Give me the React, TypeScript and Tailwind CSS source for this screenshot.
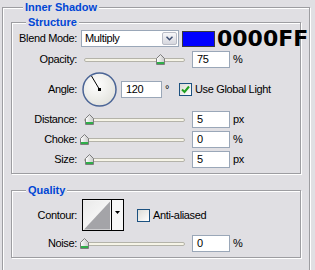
import React from 'react';

const Thumb = () => (
  <svg width="9" height="11" viewBox="0 0 9 11">
    <defs>
      <linearGradient id="thumbFill" x1="0" y1="0" x2="1" y2="0">
        <stop offset="0" stopColor="#ffffff" />
        <stop offset="1" stopColor="#c8c8c8" />
      </linearGradient>
    </defs>
    <path d="M4.5 0.5 L8.5 4.5 V10.5 H0.5 V4.5 Z" fill="url(#thumbFill)" stroke="#7d7d7d" />
    <rect x="1" y="8" width="7" height="2" fill="#2fae49" />
  </svg>
);

const Slider = ({ pos }: { pos: number }) => (
  <div className="relative ml-[4px] flex h-[17px] w-[104px] shrink-0 items-center">
    <div className="ml-[3px] h-[4px] w-[101px] rounded-[2px] border border-[#b4b3a9] bg-[#f6f4e7]" />
    <div className="absolute top-[3px] leading-none" style={{ left: pos }}>
      <Thumb />
    </div>
  </div>
);

const Field = ({ value, unit, className = '' }: { value: string; unit?: string; className?: string }) => (
  <>
    <div className={`h-[17px] shrink-0 border border-[#9aa7b8] bg-white pl-[4px] leading-[15px] ${className}`}>{value}</div>
    {unit && <span className="ml-[3px]">{unit}</span>}
  </>
);

const Label = ({ children }: { children: React.ReactNode }) => (
  <span className="w-[65px] shrink-0 text-right">{children}</span>
);

const Check = ({ checked }: { checked?: boolean }) => (
  <div className="h-[13px] w-[13px] shrink-0 border border-[#1c5180] bg-gradient-to-br from-[#dcdcd7] to-[#ffffff]">
    {checked && (
      <svg width="11" height="11" viewBox="0 0 11 11">
        <path d="M2 5.5 L4.5 8 L9 2.5" fill="none" stroke="#21a121" strokeWidth="2" />
      </svg>
    )}
  </div>
);

const Group = ({
  title,
  titleClass,
  className,
  children,
}: {
  title: string;
  titleClass: string;
  className: string;
  children: React.ReactNode;
}) => (
  <div className={`flex flex-col border border-[#9d9da1] shadow-[1px_1px_0_#fff,inset_1px_1px_0_#fff] ${className}`}>
    <div className={`-mt-[7px] w-fit bg-[#e0dfe3] px-[2px] text-[11px] font-bold leading-[13px] tracking-normal text-[#0046d5] ${titleClass}`}>
      {title}
    </div>
    {children}
  </div>
);

const Dial = () => (
  <svg width="35" height="35" viewBox="0 0 35 35" className="ml-[5px] shrink-0">
    <defs>
      <radialGradient id="dialFill" cx="0.4" cy="0.35" r="0.7">
        <stop offset="0" stopColor="#ffffff" />
        <stop offset="1" stopColor="#e2e2dc" />
      </radialGradient>
    </defs>
    <circle cx="17.5" cy="17.5" r="16.5" fill="url(#dialFill)" stroke="#4b6596" strokeWidth="1.5" />
    <line x1="17.5" y1="17.5" x2="9.5" y2="4" stroke="#000" strokeWidth="1" />
    <rect x="16" y="16" width="3" height="3" fill="#000" />
  </svg>
);

export default function App() {
  return (
    <div className="h-[270px] w-[315px] overflow-hidden bg-[#e0dfe3] pl-[2px] pt-[7px] font-['Liberation_Sans',Arial,sans-serif] text-[11px] leading-[13px] tracking-[-0.35px] text-black">
      <Group title="Inner Shadow" titleClass="ml-[12px]" className="h-[300px] w-[308px] px-[8px]">
        <Group title="Structure" titleClass="ml-[14px]" className="mt-[8px] w-[290px] pb-[5px]">
          <div className="mt-[1px] flex h-[17px] items-center">
            <Label>Blend Mode:</Label>
            <div className="ml-[4px] flex h-[17px] w-[98px] shrink-0 items-center border border-[#9aa7b8] bg-white">
              <span className="flex-1 pl-[3px]">Multiply</span>
              <div className="mr-[1px] flex h-[13px] w-[15px] items-center justify-center rounded-[2px] border border-[#b9bcc6] bg-gradient-to-b from-[#f7f7f9] to-[#d6d7de]">
                <svg width="7" height="5" viewBox="0 0 7 5">
                  <path d="M0.5 0.8 L3.5 3.8 L6.5 0.8" fill="none" stroke="#3c4e72" strokeWidth="1.5" />
                </svg>
              </div>
            </div>
            <div className="ml-[3px] h-[16px] w-[33px] shrink-0 border border-[#3a3a3a] bg-[#0000ff]" />
            <span className="ml-[2px] whitespace-nowrap font-['DejaVu_Sans',sans-serif] text-[22px] font-bold leading-[17px] tracking-normal">
              0000FF
            </span>
          </div>

          <div className="mt-[4px] flex h-[17px] items-center">
            <Label>Opacity:</Label>
            <Slider pos={75} />
            <Field value="75" unit="%" className="ml-[7px] w-[38px]" />
          </div>

          <div className="mt-[4px] flex h-[35px] items-center">
            <Label>Angle:</Label>
            <Dial />
            <Field value="120" className="ml-[4px] w-[41px]" />
            <span className="w-[17px] shrink-0 pl-[3px]">°</span>
            <Check checked />
            <span className="ml-[3px] whitespace-nowrap">Use Global Light</span>
          </div>

          <div className="mt-[4px] flex h-[17px] items-center">
            <Label>Distance:</Label>
            <Slider pos={4} />
            <Field value="5" unit="px" className="ml-[7px] w-[38px]" />
          </div>

          <div className="mt-[3px] flex h-[17px] items-center">
            <Label>Choke:</Label>
            <Slider pos={-1} />
            <Field value="0" unit="%" className="ml-[7px] w-[38px]" />
          </div>

          <div className="mt-[3px] flex h-[17px] items-center">
            <Label>Size:</Label>
            <Slider pos={4} />
            <Field value="5" unit="px" className="ml-[7px] w-[38px]" />
          </div>
        </Group>

        <Group title="Quality" titleClass="ml-[14px]" className="mt-[16px] w-[290px] pb-[5px]">
          <div className="mt-[2px] flex h-[32px] items-center">
            <Label>Contour:</Label>
            <div className="ml-[5px] flex h-[32px] w-[42px] shrink-0 border border-black bg-[#f7f7f7]">
              <svg width="29" height="30" viewBox="0 0 29 30" className="border-r border-black">
                <defs>
                  <linearGradient id="contourBg" x1="0" y1="0" x2="1" y2="1">
                    <stop offset="0" stopColor="#e9e9e9" />
                    <stop offset="1" stopColor="#ffffff" />
                  </linearGradient>
                </defs>
                <rect width="29" height="30" fill="url(#contourBg)" />
                <polygon points="1,30 28,1 28,30" fill="#a4a4a8" />
              </svg>
              <div className="flex flex-1 items-start justify-center pt-[11px]">
                <svg width="5" height="3" viewBox="0 0 5 3">
                  <polygon points="0,0 5,0 2.5,3" fill="#000" />
                </svg>
              </div>
            </div>
            <div className="ml-[13px] flex items-center">
              <Check />
              <span className="ml-[3px] whitespace-nowrap">Anti-aliased</span>
            </div>
          </div>

          <div className="mt-[4px] flex h-[17px] items-center">
            <Label>Noise:</Label>
            <Slider pos={-1} />
            <Field value="0" unit="%" className="ml-[7px] w-[38px]" />
          </div>
        </Group>
      </Group>
    </div>
  );
}
